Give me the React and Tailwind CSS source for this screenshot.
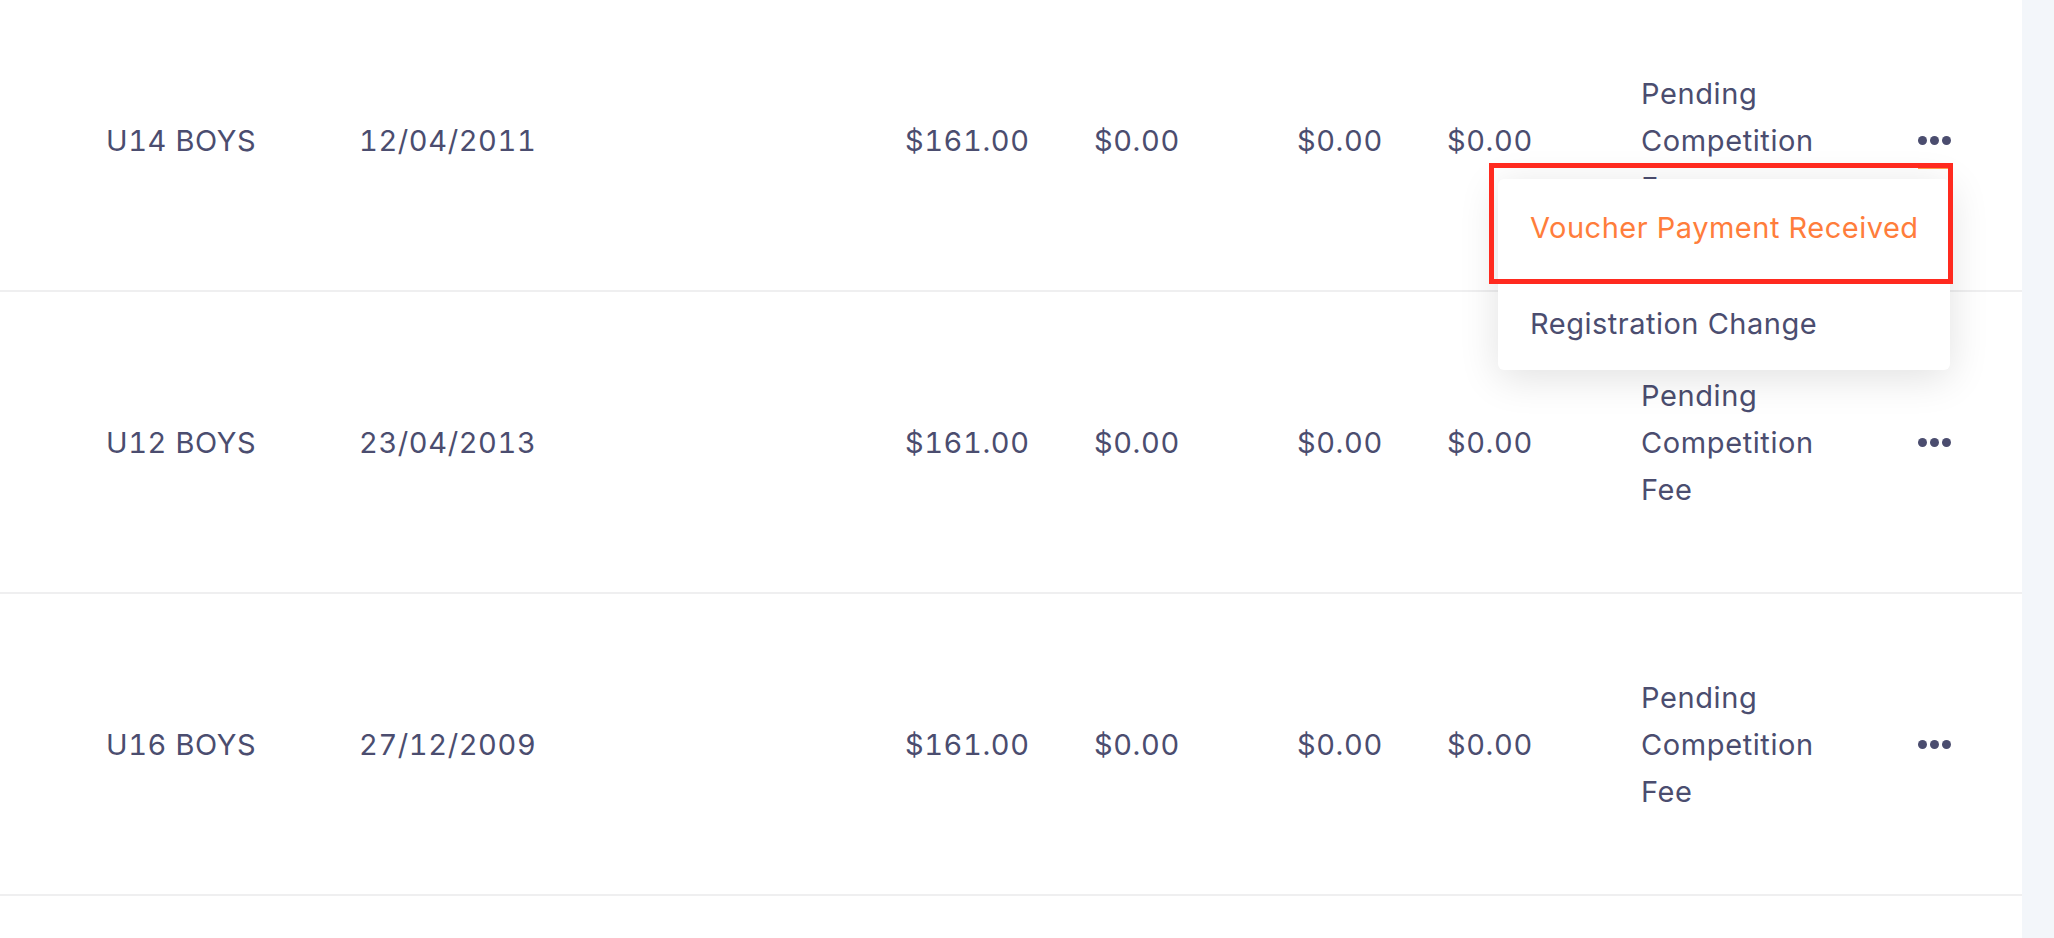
import React from 'react';

const rows = [
  { team: 'U14 BOYS', dob: '12/04/2011', fee: '$161.00', a: '$0.00', b: '$0.00', c: '$0.00' },
  { team: 'U12 BOYS', dob: '23/04/2013', fee: '$161.00', a: '$0.00', b: '$0.00', c: '$0.00' },
  { team: 'U16 BOYS', dob: '27/12/2009', fee: '$161.00', a: '$0.00', b: '$0.00', c: '$0.00' },
  null,
];

function Dots() {
  return (
    <button className="flex items-center gap-[3px]">
      <span className="size-[9px] rounded-full bg-[#4b4d6f]" />
      <span className="size-[9px] rounded-full bg-[#4b4d6f]" />
      <span className="size-[9px] rounded-full bg-[#4b4d6f]" />
    </button>
  );
}

function Row({ row }) {
  if (!row) return <div className="h-[302px] border-b-2 border-[#efeff0]" />;
  return (
    <div className="flex h-[302px] items-center border-b-2 border-[#efeff0] pl-[106px] tabular-nums">
      <p className="w-[253px] shrink-0">{row.team}</p>
      <p className="w-[546px] shrink-0">{row.dob}</p>
      <p className="w-[189px] shrink-0">{row.fee}</p>
      <p className="w-[203px] shrink-0">{row.a}</p>
      <p className="w-[150px] shrink-0">{row.b}</p>
      <p className="w-[194px] shrink-0">{row.c}</p>
      <p className="w-[277px] shrink-0 pr-[70px]">Pending Competition Fee</p>
      <Dots />
    </div>
  );
}

export default function App() {
  return (
    <div className="flex h-[938px] w-[2054px] overflow-hidden bg-white font-['Inter',sans-serif] text-[29px] leading-[47px] tracking-[0.6px] text-[#4b4d6f]">
      <div className="relative flex-1">
        <div className="-mt-[10px]">
          {rows.map((row, i) => (
            <Row key={i} row={row} />
          ))}
        </div>

        <div className="absolute left-[1498px] top-[179px] w-[452px] whitespace-nowrap rounded-md bg-white tracking-[0.5px] shadow-[0_8px_40px_rgba(0,0,0,0.12)]">
          <div className="flex h-[97px] items-center px-[32px] text-[#ff7d3b]">Voucher Payment Received</div>
          <div className="flex h-[94px] items-center px-[32px]">Registration Change</div>
        </div>

        <div className="absolute left-[1489px] top-[163px] h-[121px] w-[464px] border-[5px] border-[#ff2a1f]">
          <div className="ml-auto h-[1px] w-[30px] bg-[#ff9a4a]" />
        </div>
      </div>
      <div className="w-[32px] shrink-0 bg-[#f3f6fa]" />
    </div>
  );
}
